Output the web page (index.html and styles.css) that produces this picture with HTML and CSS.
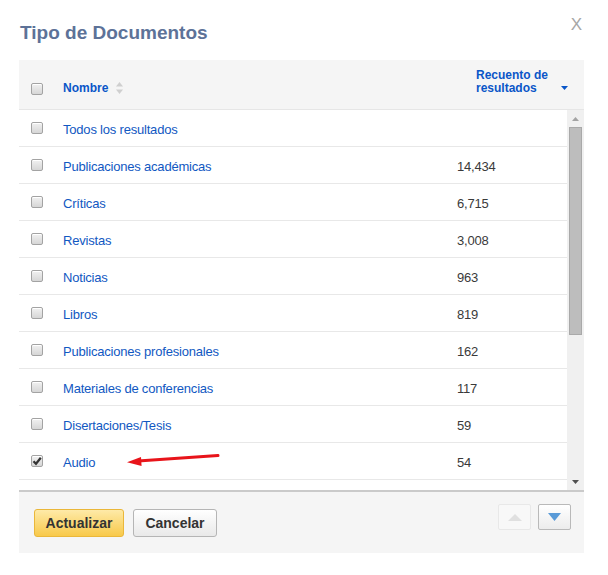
FILE: index.html
```html
<!DOCTYPE html>
<html lang="es">
<head>
<meta charset="utf-8">
<title>Tipo de Documentos</title>
<link rel="stylesheet" href="styles.css">
</head>
<body>
<div class="dialog">
  <div class="titlebar">
    <h1 class="title">Tipo de Documentos</h1>
    <span class="close">X</span>
  </div>

  <div class="thead">
    <span class="cb hcb"></span>
    <div class="th-name">Nombre
      <svg class="sort" width="7" height="12" viewBox="0 0 7 12"><path d="M3.5 0 L7 4.5 L0 4.5 Z" fill="#cfcfcf"/><path d="M0 7.5 L7 7.5 L3.5 12 Z" fill="#cfcfcf"/></svg>
    </div>
    <div class="th-count">
      <span>Recuento de<br>resultados</span>
      <svg class="caret" width="7" height="4" viewBox="0 0 7 4"><path d="M0 0 L7 0 L3.5 4 Z" fill="#0a56c8"/></svg>
    </div>
  </div>

  <div class="tbody">
    <div class="rows">
      <div class="row"><span class="cb"></span><a class="name">Todos los resultados</a><span class="num"></span></div>
      <div class="row"><span class="cb"></span><a class="name">Publicaciones académicas</a><span class="num">14,434</span></div>
      <div class="row"><span class="cb"></span><a class="name">Críticas</a><span class="num">6,715</span></div>
      <div class="row"><span class="cb"></span><a class="name">Revistas</a><span class="num">3,008</span></div>
      <div class="row"><span class="cb"></span><a class="name">Noticias</a><span class="num">963</span></div>
      <div class="row"><span class="cb"></span><a class="name">Libros</a><span class="num">819</span></div>
      <div class="row"><span class="cb"></span><a class="name">Publicaciones profesionales</a><span class="num">162</span></div>
      <div class="row"><span class="cb"></span><a class="name">Materiales de conferencias</a><span class="num">117</span></div>
      <div class="row"><span class="cb"></span><a class="name">Disertaciones/Tesis</a><span class="num">59</span></div>
      <div class="row"><span class="cb checked"><svg width="10" height="10" viewBox="0 0 10 10"><path d="M1.5 5.2 L4 7.8 L8.8 1.8" fill="none" stroke="#333" stroke-width="2.2"/></svg></span><a class="name">Audio</a><span class="num">54</span></div>
    </div>
    <div class="scrollbar">
      <span class="sb-btn"><svg width="7" height="4" viewBox="0 0 7 4"><path d="M3.5 0 L7 4 L0 4 Z" fill="#a3a3a3"/></svg></span>
      <span class="sb-track"><span class="sb-thumb"></span></span>
      <span class="sb-btn"><svg width="7" height="4" viewBox="0 0 7 4"><path d="M0 0 L7 0 L3.5 4 Z" fill="#505050"/></svg></span>
    </div>
  </div>

  <div class="footer">
    <div class="actions">
      <button class="btn btn-primary">Actualizar</button>
      <button class="btn btn-default">Cancelar</button>
    </div>
    <div class="pager">
      <span class="pg pg-up"><svg width="14" height="7" viewBox="0 0 14 7"><path d="M7 0 L14 7 L0 7 Z" fill="#e0e0e0"/></svg></span>
      <span class="pg pg-down"><svg width="13" height="8" viewBox="0 0 13 8"><path d="M0 0 L13 0 L6.5 8 Z" fill="#5a9bd8"/></svg></span>
    </div>
  </div>

  <svg class="annot" width="105" height="20" viewBox="0 0 105 20">
    <path d="M18 11 L98 5.5" stroke="#e8141a" stroke-width="3" stroke-linecap="round" fill="none"/>
    <path d="M7 12.3 L21 7 L21.6 16 Z" fill="#e8141a"/>
  </svg>
</div>
</body>
</html>
```

FILE: styles.css
```css
* { box-sizing: border-box; }

html, body {
  margin: 0;
  padding: 0;
  background: #fff;
}

body {
  font-family: "Liberation Sans", Arial, sans-serif;
  color: #333;
}

.dialog {
  position: relative;
  width: 608px;
  padding: 0 24px 0 19px;
}

.titlebar {
  height: 60px;
  display: flex;
  justify-content: space-between;
  align-items: flex-start;
}

.title {
  margin: 0 0 0 1px;
  padding-top: 21px;
  font-size: 19px;
  line-height: 24px;
  font-weight: bold;
  color: #5d7298;
}

.close {
  margin-top: 15px;
  margin-right: 2px;
  font-size: 17px;
  line-height: 20px;
  color: #a6a6a6;
}

/* checkboxes */
.cb {
  display: flex;
  align-items: center;
  justify-content: center;
  width: 12px;
  height: 12px;
  margin-left: 12px;
  border: 1px solid #a3a3a3;
  border-radius: 2px;
  background: linear-gradient(#f1f1f1, #d6d6d6);
  box-shadow: inset 0 1px 0 #fff;
}

.cb svg { display: block; }

/* header */
.thead {
  height: 50px;
  display: grid;
  grid-template-columns: 44px 1fr 108px;
  align-items: end;
  padding-bottom: 15px;
  background: #f5f5f5;
  border-bottom: 1px solid #e6e6e6;
  font-size: 12px;
  line-height: 13px;
  font-weight: bold;
  color: #0a56c8;
}

.hcb { margin-bottom: -1px; }

.th-name {
  display: flex;
  align-items: flex-end;
  margin-bottom: -1px;
}

.sort {
  display: block;
  margin-left: 8px;
  margin-bottom: 1px;
}

.th-count {
  display: flex;
  justify-content: space-between;
  align-items: flex-end;
  padding-right: 16px;
  margin-bottom: -1px;
}

.caret {
  display: block;
  margin-bottom: 5px;
}

/* body */
.tbody {
  display: flex;
  height: 380px;
}

.rows {
  flex: 1;
  overflow: hidden;
}

.row {
  display: grid;
  grid-template-columns: 44px 1fr 110px;
  align-items: start;
  height: 37px;
  padding-top: 12px;
  border-bottom: 1px solid #e8e8e8;
  font-size: 13px;
  line-height: 16px;
  letter-spacing: -0.2px;
}

.name {
  color: #1158c2;
  text-decoration: none;
}

.num {
  color: #3a3a3a;
}

/* fake scrollbar */
.scrollbar {
  width: 17px;
  display: flex;
  flex-direction: column;
  background: #f0f0f0;
}

.sb-btn {
  height: 17px;
  display: flex;
  align-items: center;
  justify-content: center;
}

.sb-btn svg { display: block; }

.sb-track {
  flex: 1;
  padding: 0 2px;
}

.sb-thumb {
  display: block;
  height: 208px;
  background: #bdbdbd;
  border: 1px solid #a9a9a9;
}

/* footer */
.footer {
  height: 63px;
  display: flex;
  justify-content: space-between;
  align-items: flex-start;
  padding: 0 13px 0 15px;
  background: #f5f5f5;
  border-top: 2px solid #cacaca;
}

.actions {
  display: flex;
  gap: 9px;
  margin-top: 17px;
}

.btn {
  height: 28px;
  padding: 0;
  border-radius: 3px;
  font-family: "Liberation Sans", Arial, sans-serif;
  font-size: 14px;
  line-height: 26px;
  font-weight: bold;
  color: #333;
  text-align: center;
}

.btn-primary {
  width: 90px;
  border: 1px solid #eab73a;
  background: linear-gradient(#feeaa8, #f8c94a);
}

.btn-default {
  width: 84px;
  border: 1px solid #b5b5b5;
  background: linear-gradient(#ffffff, #e9e9e9);
}

.pager {
  display: flex;
  gap: 7px;
  margin-top: 12px;
}

.pg {
  width: 33px;
  height: 26px;
  display: flex;
  align-items: center;
  justify-content: center;
  border-radius: 2px;
}

.pg svg { display: block; }

.pg-up {
  border: 1px solid #e8e8e8;
  background: #f8f8f8;
}

.pg-down {
  border: 1px solid #b9b9b9;
  background: linear-gradient(#ffffff, #ececec);
}

/* annotation arrow overlay */
.annot {
  position: absolute;
  left: 120px;
  top: 450px;
}
```
